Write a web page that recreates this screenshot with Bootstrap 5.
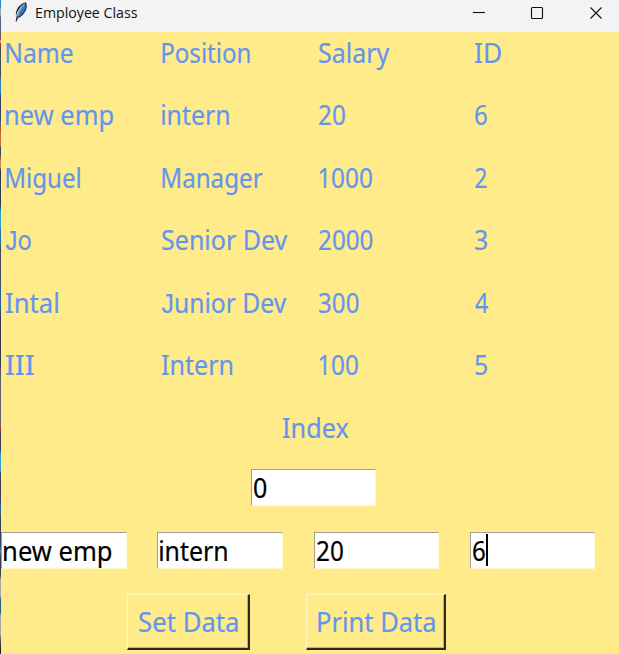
<!DOCTYPE html>
<html lang="en">
<head>
<meta charset="utf-8">
<title>Employee Class</title>
<link rel="stylesheet" href="https://cdn.jsdelivr.net/npm/bootstrap@5.3.0/dist/css/bootstrap.min.css">
<style>
body{width:619px;height:654px;background:#ffeb8a;font-family:"Noto Sans",sans-serif;font-size:27px;color:#6495ed}
main{min-width:0}
.desk{width:1px;background:linear-gradient(#2685c4 0 7px,#99a7ad 9px 14px,#52657a 18px 30px,#5a5a66 31px 36px,#a33 39px,#dba 41px,#a33 44px,#44495a 48px 75px,#2686b4 80px 92px,#394560 96px 118px,#c8702c 134px 145px,#444a59 148px 155px,#c98948 162px 167px,#333a4c 170px 205px,#2aa3c4 212px 226px,#246fa4 232px 240px,#43495e 250px 280px,#2a5b92 290px 305px,#333a4a 320px 360px,#5d6370 380px 425px,#b4452e 428px,#3a4055 433px 450px,#2aa3c4 455px 470px,#3b4054 474px 500px,#2a6ba0 510px,#3b4054 520px 545px,#3f83b0 552px,#3b4054 556px 575px,#a9a9ad 580px 595px,#2a5b82 600px 612px,#a9a9ad 616px 634px,#555 640px,#222 650px)}
.titlebar{height:32px;background:#f3f3f3;color:#111;font-family:"Open Sans","Noto Sans",sans-serif;font-size:14.5px}
.titlebar .caption{line-height:26px;margin-left:7px}
.fit{display:inline-block;white-space:pre;transform-origin:0 50%}
main>:not(.titlebar) .fit{-webkit-text-stroke:.2px}
.jay{font-family:"Liberation Sans",sans-serif;line-height:1}
.cells{display:grid;grid-template-columns:repeat(4,156.2px);grid-auto-rows:62.4px;height:375px;padding-left:5.2px;line-height:41px}
.idx{height:62px;line-height:41px;padding-left:281.5px}
.entry{width:125.5px;height:37px;background:#fff;border:1px solid #fff8d4;border-top:1.5px solid #a39f93;border-left:1.5px solid #a39f93;color:#000;line-height:35px;padding-left:2px;overflow:hidden}
.single{margin-left:249.5px}
.entries{gap:30.8px;margin-top:26px}
.caret{width:2px;height:32px;background:#000;margin:1px 0 0 -2.5px}
.push{height:56px;border:1px solid #fff9bd;border-right:2px solid #2d2a1b;border-bottom:2px solid #2d2a1b;background:#ffeb8a;box-shadow:inset -1px -1px #c4b56c;line-height:54px;padding-left:10.8px}
.actions{margin:25px 0 0 126px;gap:56px}
.set{width:123px}.print{width:140px}
</style>
<script src="https://cdn.jsdelivr.net/npm/bootstrap@5.3.0/dist/js/bootstrap.bundle.min.js"></script>
</head>
<body class="d-flex overflow-hidden">
<div class="desk flex-shrink-0 h-100"></div>
<main class="flex-grow-1">
<header class="titlebar d-flex">
<svg class="ms-2" width="20" height="24" viewBox="8.500 0 20 24"><path d="M15.800 21.500C16.200 15 18 8.500 25 2.200C27.500 7.500 24.500 14 18 18Z" fill="#3779bd"/><path d="M25 2.200C20 4 14.500 8.500 15.500 16.500C17 10 20 6 25 2.200Z" fill="#16202b"/><path d="M25 2.500C27.200 8 24 14 18 17.500" fill="none" stroke="#25384a" stroke-width="1.100"/><path d="M23.500 5C19 10 17 15 15.800 21" fill="none" stroke="#8fc0ec" stroke-width=".8"/><path d="M16.800 16L15.600 21.500" stroke="#222" stroke-width="1.100"/></svg>
<div class="caption"><span class="fit" data-w="101.500">Employee Class</span></div>
<svg class="ms-auto" width="150" height="28" viewBox="469 0 150 28" fill="none" stroke="#111" stroke-width="1.100"><path d="M473 12.500H485"/><rect x="531.500" y="7.500" width="11" height="11" rx="1"/><path d="M590.500 7.500L601.500 18.500M601.500 7.500L590.500 18.500"/></svg>
</header>
<section class="cells">
<div><span class="fit" data-w="66.500">Name</span></div><div><span class="fit" data-w="88">Position</span></div><div><span class="fit" data-w="70.500">Salary</span></div><div><span class="fit" data-w="26.500">ID</span></div>
<div><span class="fit" data-w="107.500">new emp</span></div><div><span class="fit" data-w="67">intern</span></div><div><span class="fit" data-w="26.500">20</span></div><div><span class="fit" data-w="12.500">6</span></div>
<div><span class="fit" data-w="74">Miguel</span></div><div><span class="fit" data-w="100.500">Manager</span></div><div><span class="fit" data-w="53.500">1000</span></div><div><span class="fit" data-w="12">2</span></div>
<div><span class="fit" data-w="25"><span class="jay">J</span>o</span></div><div><span class="fit" data-w="125.500">Senior Dev</span></div><div><span class="fit" data-w="54">2000</span></div><div><span class="fit" data-w="12">3</span></div>
<div><span class="fit" data-w="52">Intal</span></div><div><span class="fit" data-w="123"><span class="jay">J</span>unior Dev</span></div><div><span class="fit" data-w="40">300</span></div><div><span class="fit" data-w="13">4</span></div>
<div><span class="fit" data-w="28.500">III</span></div><div><span class="fit" data-w="70.500">Intern</span></div><div><span class="fit" data-w="39.500">100</span></div><div><span class="fit" data-w="12">5</span></div>
</section>
<div class="idx"><span class="fit" data-w="65.500">Index</span></div>
<div class="entry single"><span class="fit" data-w="13">0</span></div>
<div class="entries d-flex">
<div class="entry"><span class="fit" data-w="108">new emp</span></div>
<div class="entry"><span class="fit" data-w="67">intern</span></div>
<div class="entry"><span class="fit" data-w="26.500">20</span></div>
<div class="entry d-flex"><span class="fit" data-w="12.500">6</span><i class="caret"></i></div>
</div>
<div class="actions d-flex">
<div class="push set"><span class="fit" data-w="98.500">Set Data</span></div>
<div class="push print"><span class="fit" data-w="116.500">Print Data</span></div>
</div>
</main>
<script>
// Narrow each label to its drawn width, starting exactly at its left edge.
const ctx=document.createElement('canvas').getContext('2d');
document.querySelectorAll('.fit').forEach(el=>{
  const cs=getComputedStyle(el);
  ctx.font=cs.fontSize+' '+cs.fontFamily;
  const m=ctx.measureText(el.textContent);
  const mixed=el.children.length>0;
  const left=mixed?-0.5:m.actualBoundingBoxLeft;
  const ink=mixed?el.offsetWidth-1.5:m.actualBoundingBoxRight+left;
  const s=el.dataset.w/ink;
  el.style.transform=`translateX(${left*s}px) scaleX(${s})`;
});
</script>
</body>
</html>
